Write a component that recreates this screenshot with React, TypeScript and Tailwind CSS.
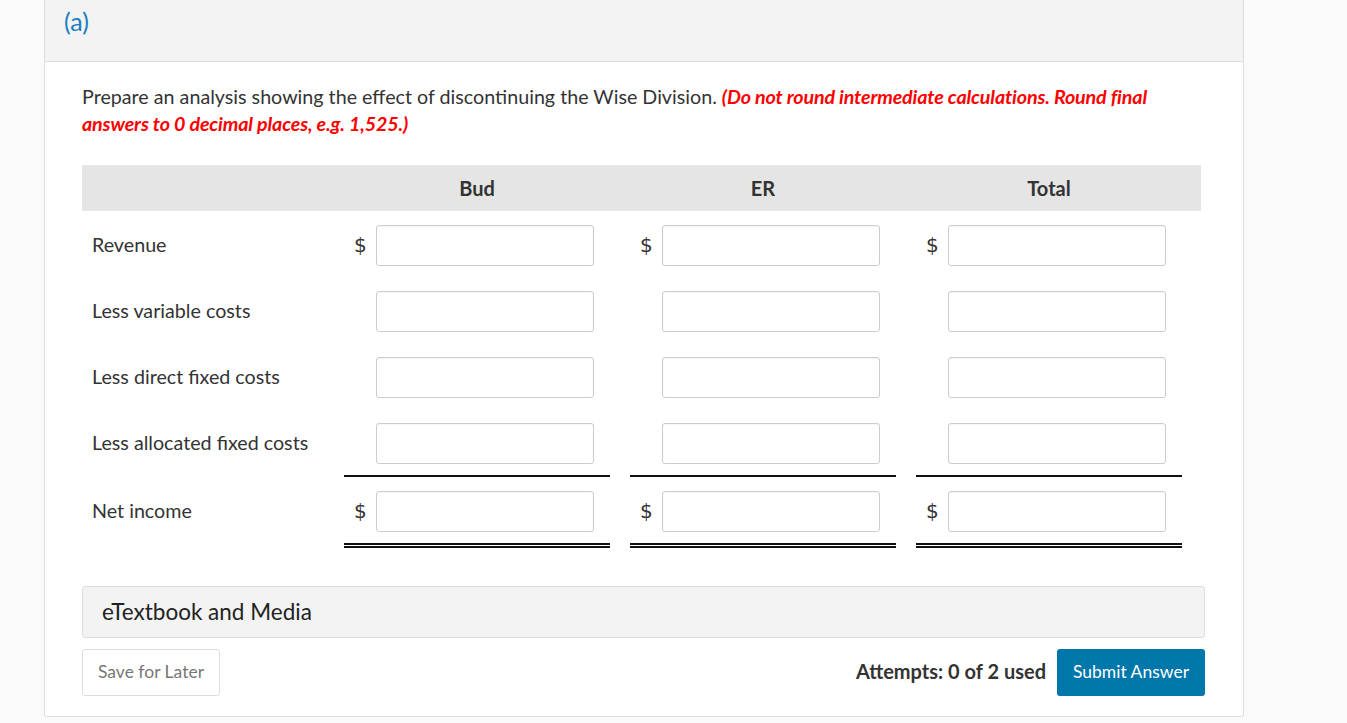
import React from "react";

const rows = [
  { label: "Revenue", dollar: true, line: "none" },
  { label: "Less variable costs", dollar: false, line: "none" },
  { label: "Less direct fixed costs", dollar: false, line: "none" },
  { label: "Less allocated fixed costs", dollar: false, line: "single" },
  { label: "Net income", dollar: true, line: "double" },
];

function Cell({ dollar, line, first }: { dollar: boolean; line: string; first: boolean }) {
  const lineCls =
    line === "single"
      ? "border-b-2 border-[#111]"
      : line === "double"
      ? "border-b-[5px] border-double border-[#111]"
      : "";
  return (
    <div className={`w-[266px] ${first ? "" : "ml-[20px]"} h-full flex items-start pt-[14px] ${lineCls}`}>
      <div className="w-[32px] h-[40px] flex items-center pl-[10px] text-[20px] text-[#333] font-['DejaVu_Sans',sans-serif]">
        {dollar ? "$" : ""}
      </div>
      <div className="w-[218px] h-[41px] border border-[#cccccc] rounded-[3px] bg-white shadow-[inset_0_1px_1px_rgba(0,0,0,0.04)]" />
    </div>
  );
}

export default function App() {
  return (
    <div className="min-h-[723px] bg-[#fafafa] font-['Lato',sans-serif] text-[#333]">
      <div className="ml-[44px] w-[1200px] h-[717px] bg-white border border-t-0 border-[#dddddd] rounded-b-[3px]">
        <div className="h-[62px] bg-[#f3f3f3] border-b border-[#dddddd] pl-[19px] pt-[5px]">
          <span className="text-[25px] text-[#1a7fc1] leading-[32px]">(a)</span>
        </div>
        <div className="pl-[37px] pr-[38px] pt-[21px]">
          <p className="text-[19.7px] leading-[27px] text-[#333] w-[1090px]">
            Prepare an analysis showing the effect of discontinuing the Wise Division.{" "}
            <span className="font-bold italic text-[#ff0000] tracking-[-0.15px]">
              (Do not round intermediate calculations. Round final answers to 0 decimal places, e.g. 1,525.)
            </span>
          </p>

          <div className="mt-[28px] w-[1119px]">
            <div className="h-[46px] bg-[#e5e5e5] flex items-center font-bold text-[20px]">
              <div className="w-[262px]" />
              <div className="w-[266px] text-center">Bud</div>
              <div className="w-[266px] ml-[20px] text-center">ER</div>
              <div className="w-[266px] ml-[20px] text-center">Total</div>
            </div>
            {rows.map((r, i) => (
              <div
                key={i}
                className={`flex ${r.line === "double" ? "h-[71px]" : r.line === "single" ? "h-[68px]" : "h-[66px]"}`}
              >
                <div className="w-[262px] pl-[10px] mt-[14px] h-[40px] flex items-center text-[19.7px] text-[#333]">
                  <span>{r.label}</span>
                </div>
                <Cell dollar={r.dollar} line={r.line} first={true} />
                <Cell dollar={r.dollar} line={r.line} first={false} />
                <Cell dollar={r.dollar} line={r.line} first={false} />
              </div>
            ))}
          </div>

          <div className="mt-[38px] h-[52px] bg-[#f3f3f3] border border-[#dddddd] rounded-[3px] flex items-center pl-[19px] text-[22.5px] text-[#222]">
            eTextbook and Media
          </div>

          <div className="mt-[11px] flex items-center justify-between">
            <button className="h-[47px] w-[138px] border border-[#dddddd] rounded-[3px] bg-white text-[17.5px] text-[#777]">
              Save for Later
            </button>
            <div className="flex items-center">
              <span className="font-bold text-[20px] text-[#333] mr-[11px] -mt-[4px]">Attempts: 0 of 2 used</span>
              <button className="h-[47px] w-[148px] rounded-[3px] bg-[#0077aa] text-white text-[17.5px]">
                Submit Answer
              </button>
            </div>
          </div>
        </div>
      </div>
    </div>
  );
}
